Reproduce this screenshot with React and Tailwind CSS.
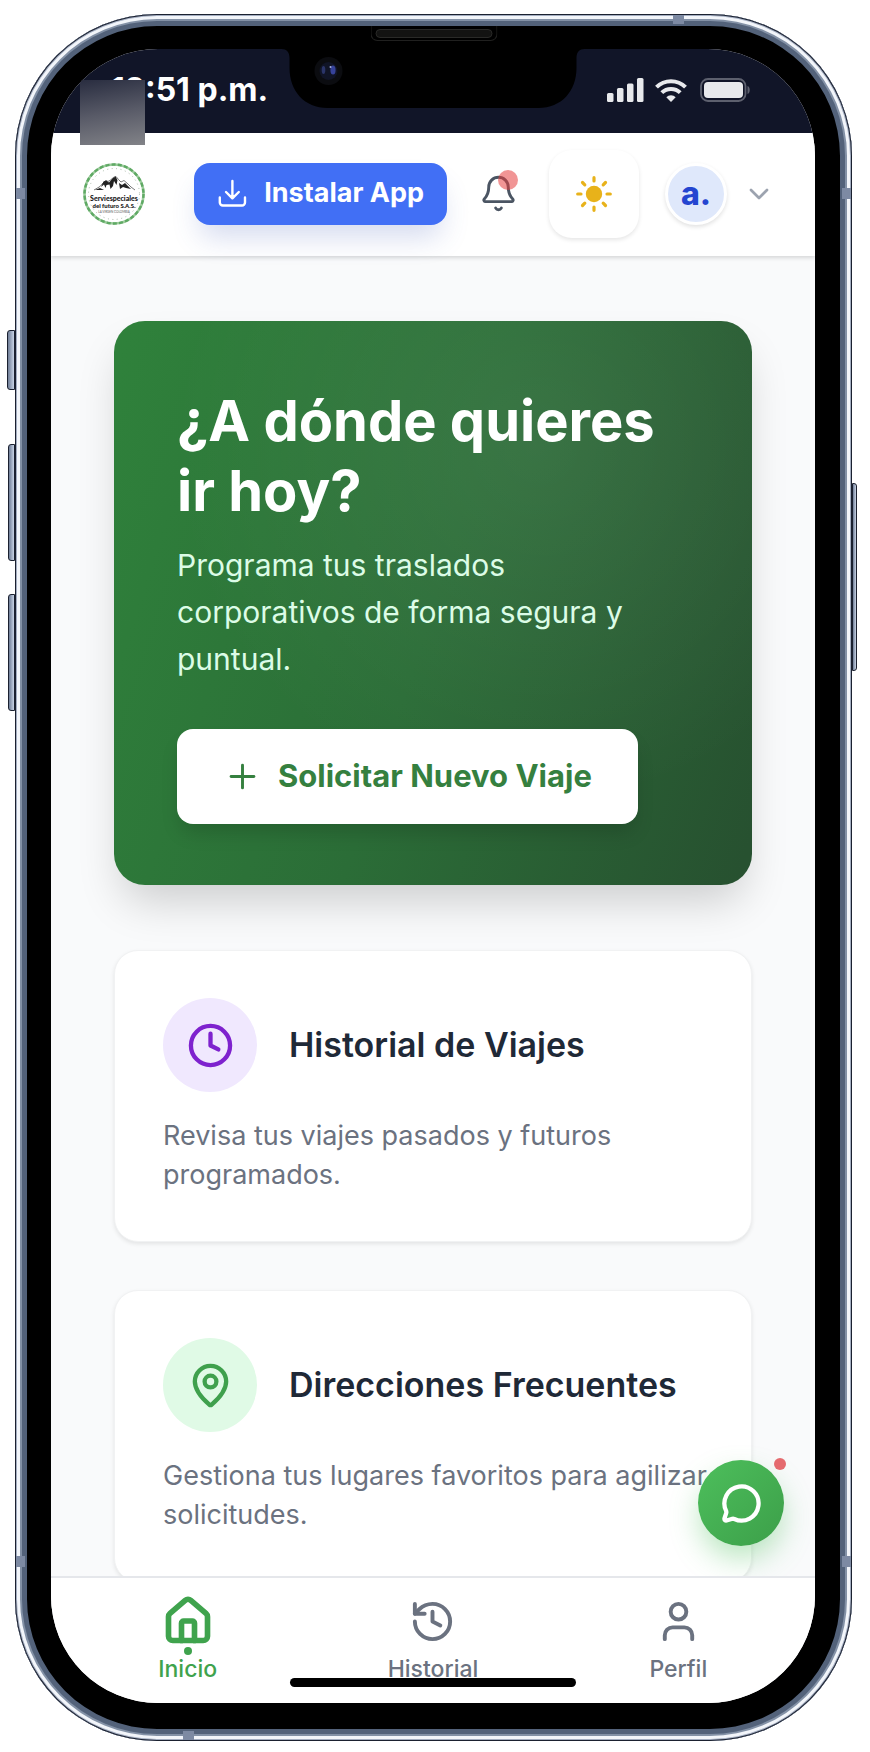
import { Bell, ChevronDown, Clock, History, House, MapPin, MessageCircle, Plus, User } from "lucide-react";

const RIM =
  "shadow-[inset_0_0_0_1px_#1b2130,inset_0_0_0_2px_#a3adc0,inset_0_0_0_5px_#f2f5fa,inset_0_0_0_7px_#8391a6,inset_0_0_0_12px_#53627a]";

function SideButton({ className }) {
  return (
    <span
      aria-hidden="true"
      className={`absolute border border-[#1b2130] bg-linear-to-r from-[#6f7d96] to-[#c9d4e6] ${className}`}
    />
  );
}

function AntennaBand({ className }) {
  return <span aria-hidden="true" className={`absolute bg-[#7d8aa3] ${className}`} />;
}

function Notch() {
  return (
    <svg
      aria-hidden="true"
      viewBox="0 0 303 59"
      className="absolute top-0 left-1/2 h-[59px] w-[303px] -translate-x-1/2"
    >
      <path d="M0 0H303C298 0 295 3 295 9V19C295 42 280 59 257 59H46C23 59 8 42 8 19V9C8 3 5 0 0 0Z" fill="#000" />
      <circle cx="47" cy="22" r="14" fill="#0b0c10" />
      <circle cx="47" cy="22" r="9" fill="#101426" />
      <ellipse cx="51.500" cy="21" rx="2.600" ry="4.500" fill="#36429a" />
      <ellipse cx="42" cy="21" rx="1.800" ry="4" fill="#2a3468" />
      <circle cx="49" cy="18" r="1" fill="#a3aede" />
    </svg>
  );
}

function StatusIcons() {
  return (
    <svg aria-label="Señal, wifi y batería" role="img" viewBox="0 0 144 24" className="h-6 w-[144px]">
      <g fill="#e8e9ec">
        <rect x="1" y="15" width="6.500" height="9" rx="1.500" />
        <rect x="11" y="10" width="6.500" height="14" rx="1.500" />
        <rect x="21" y="5.500" width="6.500" height="18.500" rx="1.500" />
        <rect x="31" y="0" width="6.500" height="24" rx="1.500" />
        <rect x="98" y="4" width="39" height="16" rx="4" />
      </g>
      <g fill="none" stroke="#e8e9ec" strokeWidth="4">
        <path d="M50.500 9.200A20.500 20.500 0 0 1 79.500 9.200" />
        <path d="M55.800 14.700A13 13 0 0 1 74.200 14.700" />
      </g>
      <path d="M65 24L60.300 19.200A6.600 6.600 0 0 1 69.700 19.200Z" fill="#e8e9ec" />
      <rect x="95" y="1" width="44.500" height="22" rx="7" fill="none" stroke="#5d606e" strokeWidth="1.800" />
      <path d="M141.500 8C144.500 9 144.500 15 141.500 16Z" fill="#5d606e" />
    </svg>
  );
}

function Logo() {
  return (
    <svg aria-label="Serviespeciales del futuro S.A.S." role="img" viewBox="0 0 62 62" className="size-[62px] shrink-0">
      <circle cx="31" cy="31" r="29.500" fill="#fff" stroke="#9ccc9c" strokeWidth="2.600" />
      <circle cx="31" cy="31" r="29.500" fill="none" stroke="#5fa964" strokeWidth="2.400" strokeDasharray="4 2.200" />
      <circle cx="31" cy="31" r="25.500" fill="none" stroke="#a9b8a9" strokeWidth="1" strokeDasharray="1 3.500" />
      <path
        d="M11 27L17 23.500L20 20L23 17.500L25 18.500L27.500 17L31 14L33 13.500L35.500 16.500L38 19L41 17.500L45 21L48 24L52 27"
        fill="none"
        stroke="#555"
        strokeWidth=".8"
      />
      <path
        d="M18 24L20.500 18.500L23 17.500L26 19.500L29.500 15.500L32.500 13.500L34.500 17L33.500 22L31 18L30 23L27.500 26L26.500 21.500L23.500 22L22.500 25L21 21.500ZM36 20L39 22L42 20L45 23L48 26L43 25L40 24L37 26ZM12 27L17 25L21 27Z"
        fill="#222"
      />
      <g fontFamily="Lato, sans-serif" textAnchor="middle" fill="#151515">
        <text x="31" y="38" fontSize="7" fontWeight="900">Serviespeciales</text>
        <text x="31" y="44.500" fontSize="6" fontWeight="900">del futuro S.A.S.</text>
        <text x="31" y="49.500" fontSize="3" fill="#555">LA VIRGEN COLOMBIA</text>
      </g>
    </svg>
  );
}

function DownloadIcon() {
  return (
    <svg
      aria-hidden="true"
      viewBox="0 0 31 31"
      fill="none"
      stroke="#fff"
      strokeWidth="2.400"
      strokeLinecap="round"
      strokeLinejoin="round"
      className="size-[31px] shrink-0"
    >
      <path d="M2.800 19.500V24.500A3 3 0 0 0 5.800 27.500H25A3 3 0 0 0 28 24.500V19.500M15.400 3V20M9 14L15.400 20.300L21.800 14" />
    </svg>
  );
}

function SunIcon() {
  return (
    <svg
      aria-hidden="true"
      viewBox="0 0 36 36"
      stroke="#e8b21a"
      strokeWidth="3.200"
      strokeLinecap="round"
      className="size-9"
    >
      <circle cx="18" cy="18" r="8.200" fill="#e8b21a" stroke="none" />
      <path d="M18 1.700V5M18 31V34.300M1.700 18H5M31 18H34.300M6.500 6.500L8.800 8.800M27.200 27.200L29.500 29.500M29.500 6.500L27.200 8.800M8.800 27.200L6.500 29.500" />
    </svg>
  );
}

function StatusBar() {
  return (
    <div className="flex h-[84px] items-center justify-between bg-[#111528] pr-[65px] pb-[2px] pl-[60px]">
      <time className="text-[32px] leading-none font-bold text-white">12:51 p.m.</time>
      <StatusIcons />
    </div>
  );
}

function Header() {
  return (
    <header className="relative z-10 flex h-[123px] items-center justify-between bg-white pr-[40px] pb-[2px] pl-8 shadow-[0_2px_4px_rgba(0,0,0,0.14)]">
      <Logo />
      <div className="flex items-center gap-[26px]">
        <button
          type="button"
          className="flex h-[62px] items-center gap-4 rounded-[16px] bg-[#416ff5] px-[23px] text-[27px] font-bold whitespace-nowrap text-white shadow-[0_18px_28px_-6px_rgba(65,90,180,0.22)]"
        >
          <DownloadIcon />
          Instalar App
        </button>
        <button type="button" aria-label="Notificaciones" className="relative flex w-[50px] justify-center">
          <Bell className="size-[39px] text-[#4b5563]" strokeWidth={1.8} />
          <span className="absolute -top-[4px] right-[5px] size-5 rounded-full bg-[#e53e3e]/55" />
        </button>
        <button
          type="button"
          aria-label="Cambiar tema"
          className="flex h-[88px] w-[90px] items-center justify-center rounded-[23px] bg-white shadow-[0_2px_4px_rgba(0,0,0,0.1)]"
        >
          <SunIcon />
        </button>
        <button type="button" aria-label="Menú de usuario" className="flex items-center gap-4">
          <span className="flex size-[62px] items-center justify-center rounded-full border-[3px] border-white bg-[#dfe8fb] text-[32px] leading-none font-extrabold text-[#2445d0] shadow-[0_2px_4px_rgba(0,0,0,0.12)]">
            a.
          </span>
          <ChevronDown className="size-8 text-[#9ca3af]" strokeWidth={2} />
        </button>
      </div>
    </header>
  );
}

function Hero() {
  return (
    <section className="rounded-[31px] bg-[radial-gradient(circle_at_66%_22%,rgba(255,255,255,0.07),transparent_60%),linear-gradient(108deg,#2f813b_2%,#2b6d37_50%,#275130_98%)] px-[63px] pt-[65px] pb-[61px] shadow-[0_24px_44px_-8px_rgba(0,0,0,0.18)]">
      <h1 className="text-[56px] leading-[70px] font-bold text-white">¿A dónde quieres ir hoy?</h1>
      <p className="mt-4 text-[30px] leading-[47px] text-[#dcfce7]">
        Programa tus traslados corporativos de forma segura y puntual.
      </p>
      <button
        type="button"
        className="mt-[46px] flex h-[95px] items-center gap-4 rounded-[16px] bg-white px-[46px] text-[31px] font-bold whitespace-nowrap text-[#35803f] shadow-[0_12px_20px_-4px_rgba(0,0,0,0.16)]"
      >
        <Plus className="size-[39px]" strokeWidth={1.8} />
        Solicitar Nuevo Viaje
      </button>
    </section>
  );
}

function Card({ icon: Icon, tone, title, children }) {
  return (
    <article className="rounded-[24px] border border-[#f1f2f3] bg-white py-[47px] pr-8 pl-12 shadow-[0_2px_4px_rgba(0,0,0,0.09)]">
      <div className="flex items-center gap-8">
        <span className={`flex size-[94px] shrink-0 items-center justify-center rounded-full ${tone}`}>
          <Icon className="size-[47px]" strokeWidth={2.2} />
        </span>
        <h2 className="text-[34px] leading-[48px] font-semibold text-[#1f2937]">{title}</h2>
      </div>
      <p className="mt-6 text-[27px] leading-[39px] text-[#6b7280]">{children}</p>
    </article>
  );
}

function Tab({ icon: Icon, label, active }) {
  return (
    <a
      href={`#${label.toLowerCase()}`}
      aria-current={active ? "page" : undefined}
      className={`relative flex flex-col items-center gap-[6px] text-[23px] leading-[32px] font-medium ${
        active ? "text-[#3fa34d]" : "text-[#6b7280]"
      }`}
    >
      <span className="flex h-[52px] items-center">
        <Icon className={active ? "size-[52px]" : "size-[47px]"} strokeWidth={active ? 2.6 : 2} />
      </span>
      {active && <span className="absolute top-[52px] size-2 rounded-full bg-[#3fa34d]" />}
      {label}
    </a>
  );
}

export default function App() {
  return (
    <div className="min-h-screen bg-white pt-[14px] pr-[18px] pb-[11px] pl-[15px] font-[Inter,'Liberation_Sans',sans-serif]">
      <div className={`relative rounded-[142px] bg-black pt-[35px] pr-[37px] pb-[38px] pl-9 ${RIM}`}>
        <SideButton className="top-[316px] -left-2 h-[60px] w-2 rounded-l-[3px]" />
        <SideButton className="top-[430px] -left-[7px] h-[117px] w-[7px] rounded-l-[3px]" />
        <SideButton className="top-[580px] -left-[7px] h-[117px] w-[7px] rounded-l-[3px]" />
        <SideButton className="top-[469px] -right-[5px] h-[188px] w-[5px] rounded-r-[3px]" />
        <AntennaBand className="top-[174px] left-px h-[11px] w-[9px]" />
        <AntennaBand className="top-[174px] right-px h-[11px] w-[9px]" />
        <AntennaBand className="bottom-[174px] left-px h-[11px] w-[9px]" />
        <AntennaBand className="right-px bottom-[174px] h-[11px] w-[9px]" />
        <AntennaBand className="top-px right-[168px] h-[9px] w-[11px]" />
        <AntennaBand className="bottom-px left-[168px] h-[9px] w-[11px]" />
        <span
          aria-hidden="true"
          className="absolute top-[12px] left-1/2 flex h-[15px] w-[127px] -translate-x-1/2 items-center justify-center rounded-b-[7px] border border-t-0 border-[#20201f] bg-black"
        >
          <span className="h-[9px] w-[117px] rounded-full border border-[#2a2a28] bg-[#131312]" />
        </span>

        <div className="relative overflow-hidden rounded-[107px] bg-[#f9fafb]">
          <StatusBar />
          <Notch />
          <Header />
          <span
            aria-hidden="true"
            className="absolute top-[31px] left-[29px] z-20 size-[65px] bg-linear-[170deg] from-[#292d40] via-[#585a67] to-[#828388]"
          />

          <main className="flex flex-col px-[63px] pt-[65px]">
            <Hero />
            <div className="mt-[65px] flex flex-col gap-12">
              <Card icon={Clock} tone="bg-[#f0e8fe] text-[#7e22ce]" title="Historial de Viajes">
                Revisa tus viajes pasados y futuros programados.
              </Card>
              <Card icon={MapPin} tone="bg-[#e0fae6] text-[#3fa04d]" title="Direcciones Frecuentes">
                Gestiona tus lugares favoritos para agilizar solicitudes.
              </Card>
            </div>
          </main>

          <button
            type="button"
            aria-label="Abrir chat"
            className="absolute right-[31px] bottom-[157px] flex size-[86px] items-center justify-center rounded-full bg-linear-to-br from-[#4dbf5c] to-[#3c9f49] text-white shadow-[0_14px_30px_-2px_rgba(74,190,90,0.4)]"
          >
            <MessageCircle className="size-[41px]" strokeWidth={2.5} />
            <span className="absolute -top-[2px] -right-[2px] size-3 rounded-full bg-[#e56b6f]" />
          </button>

          <nav
            aria-label="Principal"
            className="relative -mt-1.5 grid h-[127px] grid-cols-3 items-start border-t-2 border-[#e5e7eb] bg-white px-[14px] pt-[17px]"
          >
            <Tab icon={House} label="Inicio" active />
            <Tab icon={History} label="Historial" />
            <Tab icon={User} label="Perfil" />
            <span
              aria-hidden="true"
              className="absolute bottom-4 left-1/2 h-[9px] w-[286px] -translate-x-1/2 rounded-full bg-black"
            />
          </nav>
        </div>
      </div>
    </div>
  );
}
